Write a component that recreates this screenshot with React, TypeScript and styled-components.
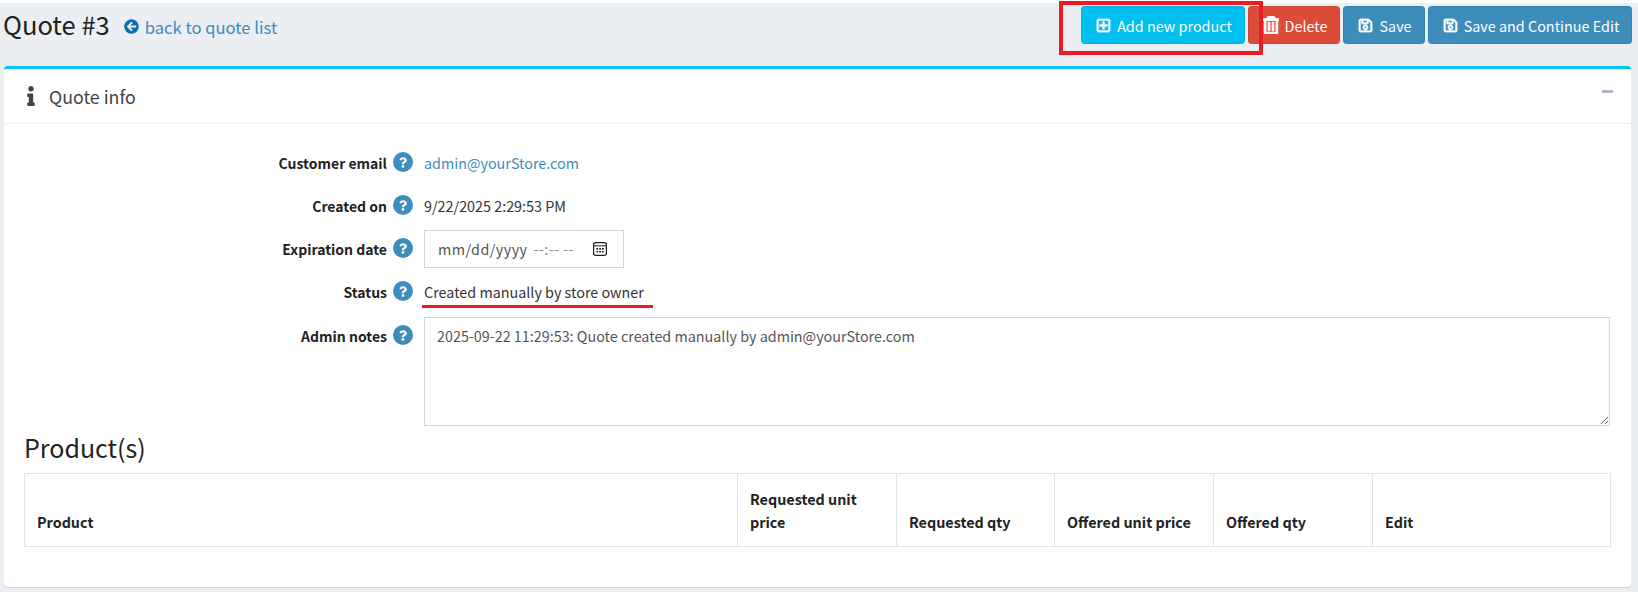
import styled, { createGlobalStyle } from "styled-components";
import {
  FaArrowCircleLeft,
  FaInfo,
  FaMinus,
  FaQuestion,
  FaRegPlusSquare,
  FaRegSave,
  FaRegTrashAlt,
} from "react-icons/fa";

const GlobalStyle = createGlobalStyle`
  html, body {
    margin: 0;
    padding: 0;
    background: #fff;
  }
  * {
    box-sizing: border-box;
  }
  body {
    font-family: "Noto Sans CJK SC", "Noto Sans", sans-serif;
    font-size: 14.35px;
    color: #333;
  }
`;

const fields = [
  { label: "Customer email", kind: "link", value: "admin@yourStore.com" },
  { label: "Created on", kind: "text", value: "9/22/2025 2:29:53 PM" },
  { label: "Expiration date", kind: "date", value: "" },
  { label: "Status", kind: "text", value: "Created manually by store owner" },
];

const columns = [
  { title: "Product", width: 713 },
  { title: "Requested unit price", width: 159 },
  { title: "Requested qty", width: 158 },
  { title: "Offered unit price", width: 159 },
  { title: "Offered qty", width: 159 },
  { title: "Edit", width: 238 },
];

function Help() {
  return (
    <HelpIcon>
      <HelpDot>
        <FaQuestion />
      </HelpDot>
    </HelpIcon>
  );
}

function CalendarIcon() {
  return (
    <CalendarSvg viewBox="0 0 14 14" fill="none">
      <rect x="0.6" y="0.6" width="12.8" height="12.8" rx="2.2" stroke="#222" strokeWidth="1.2" />
      <path d="M1 3.9h12" stroke="#222" strokeWidth="1" />
      <path d="M3.4 6h1.7v1.7H3.4zM6.2 6h1.7v1.7H6.2zM9 6h1.7v1.7H9zM3.4 8.9h1.7v1.7H3.4zM6.2 8.9h1.7v1.7H6.2zM9 8.9h1.7v1.7H9z" fill="#222" />
    </CalendarSvg>
  );
}

export default function App() {
  return (
    <Page>
      <GlobalStyle />
      <Header>
        <TitleBlock>
          <Title>Quote #3</Title>
          <BackLink href="#">
            <FaArrowCircleLeft />
            back to quote list
          </BackLink>
        </TitleBlock>
        <Actions>
          <ActionButton $color="#00c0ef" $width={164}>
            <FaRegPlusSquare />
            Add new product
          </ActionButton>
          <ActionButton $color="#dd4b39" $width={92}>
            <TrashWrap>
              <FaRegTrashAlt />
            </TrashWrap>
            Delete
          </ActionButton>
          <ActionButton $color="#3c8dbc" $width={82}>
            <FaRegSave />
            Save
          </ActionButton>
          <ActionButton $color="#3c8dbc" $width={204}>
            <FaRegSave />
            Save and Continue Edit
          </ActionButton>
        </Actions>
        <Highlight />
      </Header>
      <Card>
        <CardHeader>
          <CardTitle>
            <FaInfo />
            Quote info
          </CardTitle>
          <Collapse>
            <FaMinus />
          </Collapse>
        </CardHeader>
        <CardBody>
          {fields.map((field) => (
            <FormRow key={field.label}>
              <Label>{field.label}</Label>
              <Help />
              <Value>
                {field.kind === "link" && <EmailLink href="#">{field.value}</EmailLink>}
                {field.kind === "text" && <span>{field.value}</span>}
                {field.kind === "date" && (
                  <DateField>
                    <DateMask>mm/dd/yyyy</DateMask>
                    <TimeMask>--:-- --</TimeMask>
                    <CalendarIcon />
                  </DateField>
                )}
                {field.label === "Status" && <Underline />}
              </Value>
            </FormRow>
          ))}
          <NotesRow>
            <Label>Admin notes</Label>
            <Help />
            <Notes defaultValue="2025-09-22 11:29:53: Quote created manually by admin@yourStore.com" />
          </NotesRow>
          <SectionTitle>Product(s)</SectionTitle>
          <Table>
            <colgroup>
              {columns.map((col) => (
                <col key={col.title} width={col.width} />
              ))}
            </colgroup>
            <thead>
              <tr>
                {columns.map((col) => (
                  <Th key={col.title}>{col.title}</Th>
                ))}
              </tr>
            </thead>
          </Table>
        </CardBody>
      </Card>
    </Page>
  );
}

const Page = styled.div`
  position: relative;
  height: 589px;
  margin-top: 3px;
  padding: 0 7px 0 4px;
  background: #ebeef3;
`;

const Header = styled.header`
  position: relative;
  display: flex;
  align-items: flex-start;
  justify-content: space-between;
  height: 63px;
  padding-top: 3px;
`;

const TitleBlock = styled.div`
  display: flex;
  align-items: center;
  height: 38px;
  margin-left: -1px;
`;

const Title = styled.h1`
  margin: -3px 0 0;
  font-size: 25.5px;
  font-weight: 400;
  line-height: 36px;
  color: #222;
`;

const BackLink = styled.a`
  display: flex;
  align-items: center;
  gap: 6px;
  margin: 3px 0 0 14px;
  font-size: 16.6px;
  line-height: 24px;
  color: #3c8dbc;
  text-decoration: none;

  svg {
    width: 15px;
    height: 15px;
    color: #0a6fae;
  }
`;

const Actions = styled.div`
  display: flex;
  gap: 3px;
  margin-right: -1px;
`;

const ActionButton = styled.button<{ $color: string; $width: number }>`
  display: flex;
  align-items: center;
  justify-content: center;
  gap: 6px;
  width: ${(p) => p.$width}px;
  height: 38px;
  padding: 0 0 0 2px;
  border: 1px solid rgba(0, 0, 0, 0.06);
  border-radius: 4px;
  background: ${(p) => p.$color};
  color: #fff;
  font-family: inherit;
  font-size: 14.4px;

  svg {
    width: 15px;
    height: 15px;
    stroke: currentColor;
    stroke-width: 24;
  }
`;

const TrashWrap = styled.span`
  display: flex;

  svg {
    width: 16px;
    height: 18px;
    stroke-width: 30;
  }
`;

const Highlight = styled.div`
  position: absolute;
  top: -2px;
  right: 368px;
  width: 204px;
  height: 54px;
  border: 4px solid #ed1c24;
  pointer-events: none;
`;

const Card = styled.section`
  height: 521px;
  width: 1627px;
  border-top: 3px solid #00c0ef;
  border-radius: 4px;
  background: #fff;
  box-shadow: 0 1px 1px rgba(0, 0, 0, 0.12);
`;

const CardHeader = styled.div`
  display: flex;
  align-items: center;
  justify-content: space-between;
  height: 55px;
  padding: 0 17px 0 23px;
  border-bottom: 1px solid #f0f0f0;
`;

const CardTitle = styled.h2`
  display: flex;
  align-items: center;
  gap: 14px;
  margin: 0;
  font-size: 17.8px;
  font-weight: 400;
  color: #444;

  svg {
    width: 8px;
    height: 20px;
  }
`;

const Collapse = styled.span`
  display: flex;
  margin-bottom: 10px;
  color: #a5acbd;

  svg {
    width: 13px;
    height: 13px;
  }
`;

const CardBody = styled.div`
  padding: 20px 20px 0;
`;

const FormRow = styled.div`
  display: flex;
  align-items: flex-start;
  min-height: 38px;
  margin-bottom: 5px;
`;

const NotesRow = styled(FormRow)`
  margin-top: 6px;
`;

const Label = styled.label`
  width: 363px;
  flex: none;
  font-size: 14px;
  font-weight: 600;
  line-height: 38px;
  text-align: right;
  color: #222;
`;

const HelpIcon = styled.span`
  display: flex;
  flex: none;
  width: 37px;
  height: 38px;
  padding: 8px 0 0 6px;
`;

const HelpDot = styled.span`
  display: flex;
  align-items: center;
  justify-content: center;
  width: 20px;
  height: 20px;
  border-radius: 50%;
  background: #3c8dbc;
  color: #fff;

  svg {
    width: 8px;
    height: 11px;
  }
`;

const Value = styled.div`
  position: relative;
  line-height: 38px;
  color: #333;
`;

const EmailLink = styled.a`
  color: #3c8dbc;
  text-decoration: none;
`;

const DateField = styled.div`
  display: flex;
  align-items: center;
  width: 200px;
  height: 38px;
  padding: 0 16px 0 13px;
  border: 1px solid #d2d6de;
  background: #fff;
  color: #555;
`;

const DateMask = styled.span`
  letter-spacing: 0.45px;
`;

const TimeMask = styled.span`
  margin-left: 6px;
  letter-spacing: 0.4px;
  color: #8a8f98;
`;

const CalendarSvg = styled.svg`
  width: 14px;
  height: 14px;
  margin-left: auto;
`;

const Underline = styled.span`
  position: absolute;
  left: -2px;
  top: 32px;
  width: 231px;
  height: 3px;
  background: #ed1c24;
`;

const Notes = styled.textarea`
  display: block;
  width: 1186px;
  height: 109px;
  padding: 7px 12px;
  border: 1px solid #d2d6de;
  background: #fff;
  font-family: inherit;
  font-size: 14.35px;
  line-height: 22px;
  color: #555;
  outline: none;
`;

const SectionTitle = styled.h3`
  margin: -4px 0 5px;
  font-size: 25px;
  font-weight: 400;
  line-height: 41px;
  color: #222;
`;

const Table = styled.table`
  width: 1586px;
  margin-top: 0;
  border-collapse: collapse;
  table-layout: fixed;
`;

const Th = styled.th`
  height: 73px;
  padding: 8px 12px 13px;
  border: 1px solid #e4e4e4;
  font-size: 14.35px;
  font-weight: 700;
  line-height: 23px;
  text-align: left;
  vertical-align: bottom;
  color: #222;
`;
